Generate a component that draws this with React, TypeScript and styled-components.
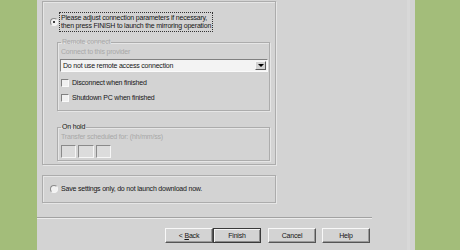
import React from 'react';
import styled, { createGlobalStyle } from 'styled-components';

const GlobalStyle = createGlobalStyle`
  html, body {
    margin: 0;
    padding: 0;
    background: #a3bd7a;
  }
  body {
    font-family: "Liberation Sans", Arial, sans-serif;
    font-size: 7px;
    letter-spacing: -0.2px;
    color: #151515;
  }
`;

const Page = styled.div`
  width: 460px;
  height: 250px;
  overflow: hidden;
  display: flex;
  padding-left: 37px;
  box-sizing: border-box;
`;

const Dialog = styled.div`
  width: 378px;
  height: 250px;
  background: #d3d3d3;
  box-sizing: border-box;
  padding: 1px 0 0 5px;
  display: flex;
  flex-direction: column;
  box-shadow: inset -5px 0 0 #d3d3d3, inset -8px 0 0 #d8d8d8;
`;

const OptionFrame = styled.div<{ $height: number; $top?: number }>`
  width: 234px;
  height: ${p => p.$height}px;
  margin-top: ${p => p.$top || 0}px;
  box-sizing: border-box;
  border: 1px solid #acacac;
  box-shadow: inset 1px 1px 0 #e6e6e6, 1px 1px 0 #e6e6e6;
  display: flex;
  flex-direction: column;
  padding: 10px 0 0 7px;
`;

const CenteredFrame = styled(OptionFrame)`
  padding: 0 0 0 7px;
  justify-content: center;
`;

const RadioRow = styled.div`
  display: flex;
  align-items: center;
  gap: 1px;
`;

const Radio = styled.span<{ $checked?: boolean }>`
  width: 6px;
  height: 6px;
  border-radius: 50%;
  background: #f2f2f2;
  border: 1px solid;
  border-color: #8a8a8a #f6f6f6 #f6f6f6 #8a8a8a;
  display: flex;
  align-items: center;
  justify-content: center;
  flex-shrink: 0;
  &::after {
    content: '';
    width: 2px;
    height: 2px;
    border-radius: 50%;
    background: ${p => (p.$checked ? '#000' : 'transparent')};
  }
`;

const Label = styled.span<{ $focused?: boolean }>`
  line-height: 8px;
  padding: 1px 1px;
  border: 1px dotted ${p => (p.$focused ? '#333' : 'transparent')};
  white-space: nowrap;
`;

const Group = styled.fieldset<{ $height: number; $top: number }>`
  margin: ${p => p.$top}px 0 0 7px;
  width: 213px;
  height: ${p => p.$height}px;
  min-width: 0;
  box-sizing: border-box;
  padding: 0 3px;
  border: 1px solid #acacac;
  box-shadow: inset 1px 1px 0 #e6e6e6, 1px 1px 0 #e6e6e6;
  display: flex;
  flex-direction: column;
`;

const Legend = styled.legend<{ $disabled?: boolean }>`
  padding: 0 1px;
  line-height: 8px;
  color: ${p => (p.$disabled ? '#a8a8a8' : '#151515')};
`;

const Hint = styled.div<{ $top: number }>`
  margin-top: ${p => p.$top}px;
  line-height: 8px;
  color: #a8a8a8;
`;

const Select = styled.div`
  margin: 3px 0 0 -1px;
  width: 208px;
  height: 13px;
  box-sizing: border-box;
  background: #f3f3f3;
  border: 1px solid;
  border-color: #808080 #fafafa #fafafa #808080;
  display: flex;
  align-items: center;
  justify-content: space-between;
  padding: 0 1px 0 2px;
`;

const SelectArrow = styled.span`
  width: 11px;
  height: 9px;
  box-sizing: border-box;
  background: #d3d3d3;
  border: 1px solid;
  border-color: #f6f6f6 #5a5a5a #5a5a5a #f6f6f6;
  display: flex;
  align-items: center;
  justify-content: center;
  &::after {
    content: '';
    border-left: 3px solid transparent;
    border-right: 3px solid transparent;
    border-top: 3px solid #000;
  }
`;

const CheckRow = styled.div<{ $top: number }>`
  margin-top: ${p => p.$top}px;
  display: flex;
  align-items: center;
  gap: 3px;
  line-height: 9px;
`;

const Checkbox = styled.span`
  width: 8px;
  height: 8px;
  box-sizing: border-box;
  background: #f0f0f0;
  border: 1px solid;
  border-color: #808080 #fafafa #fafafa #808080;
`;

const TimeRow = styled.div`
  margin-top: 4px;
  display: flex;
  gap: 2px;
`;

const TimeBox = styled.span<{ $width: number }>`
  width: ${p => p.$width}px;
  height: 13px;
  box-sizing: border-box;
  background: #dcdcdc;
  border: 1px solid;
  border-color: #8a8a8a #f6f6f6 #f6f6f6 #8a8a8a;
`;

const Separator = styled.div`
  margin: 14px 0 0 -5px;
  width: 335px;
  border-top: 1px solid #a2a2a2;
  border-bottom: 1px solid #ececec;
`;

const ButtonRow = styled.div`
  margin: 9px 0 0 123px;
  display: flex;
`;

const Button = styled.div<{ $default?: boolean; $gap?: number }>`
  width: 48px;
  height: 15px;
  margin-left: ${p => p.$gap || 0}px;
  box-sizing: border-box;
  background: #d3d3d3;
  border: 1px solid;
  border-color: ${p => (p.$default ? '#3a3a3a' : '#f8f8f8 #555 #555 #f8f8f8')};
  box-shadow: ${p => (p.$default ? 'inset 1px 1px 0 #f4f4f4, inset -1px -1px 0 #8a8a8a' : 'inset -1px -1px 0 #9a9a9a')};
  display: flex;
  align-items: center;
  justify-content: center;
  line-height: 8px;
  color: #151515;
`;

export default function App() {
  return (
    <>
      <GlobalStyle />
      <Page>
        <Dialog>
          <OptionFrame $height={164}>
            <RadioRow>
              <Radio $checked />
              <Label $focused>
                Please adjust connection parameters if necessary,
                <br />
                then press FINISH to launch the mirroring operation
              </Label>
            </RadioRow>
            <Group $height={73} $top={6}>
              <Legend $disabled>Remote connect</Legend>
              <Hint $top={2}>Connect to this provider</Hint>
              <Select>
                <span>Do not use remote access connection</span>
                <SelectArrow />
              </Select>
              <CheckRow $top={6}>
                <Checkbox />
                Disconnect when finished
              </CheckRow>
              <CheckRow $top={6}>
                <Checkbox />
                Shutdown PC when finished
              </CheckRow>
            </Group>
            <Group $height={38} $top={12}>
              <Legend>On hold</Legend>
              <Hint $top={2}>Transfer scheduled for: (hh/mm/ss)</Hint>
              <TimeRow>
                <TimeBox $width={15} />
                <TimeBox $width={16} />
                <TimeBox $width={15} />
              </TimeRow>
            </Group>
          </OptionFrame>
          <CenteredFrame $height={28} $top={10}>
            <RadioRow>
              <Radio />
              <Label>Save settings only, do not launch download now.</Label>
            </RadioRow>
          </CenteredFrame>
          <Separator />
          <ButtonRow>
            <Button>
              &lt;&nbsp;<u>B</u>ack
            </Button>
            <Button $default>Finish</Button>
            <Button $gap={7}>Cancel</Button>
            <Button $gap={6}>Help</Button>
          </ButtonRow>
        </Dialog>
      </Page>
    </>
  );
}
